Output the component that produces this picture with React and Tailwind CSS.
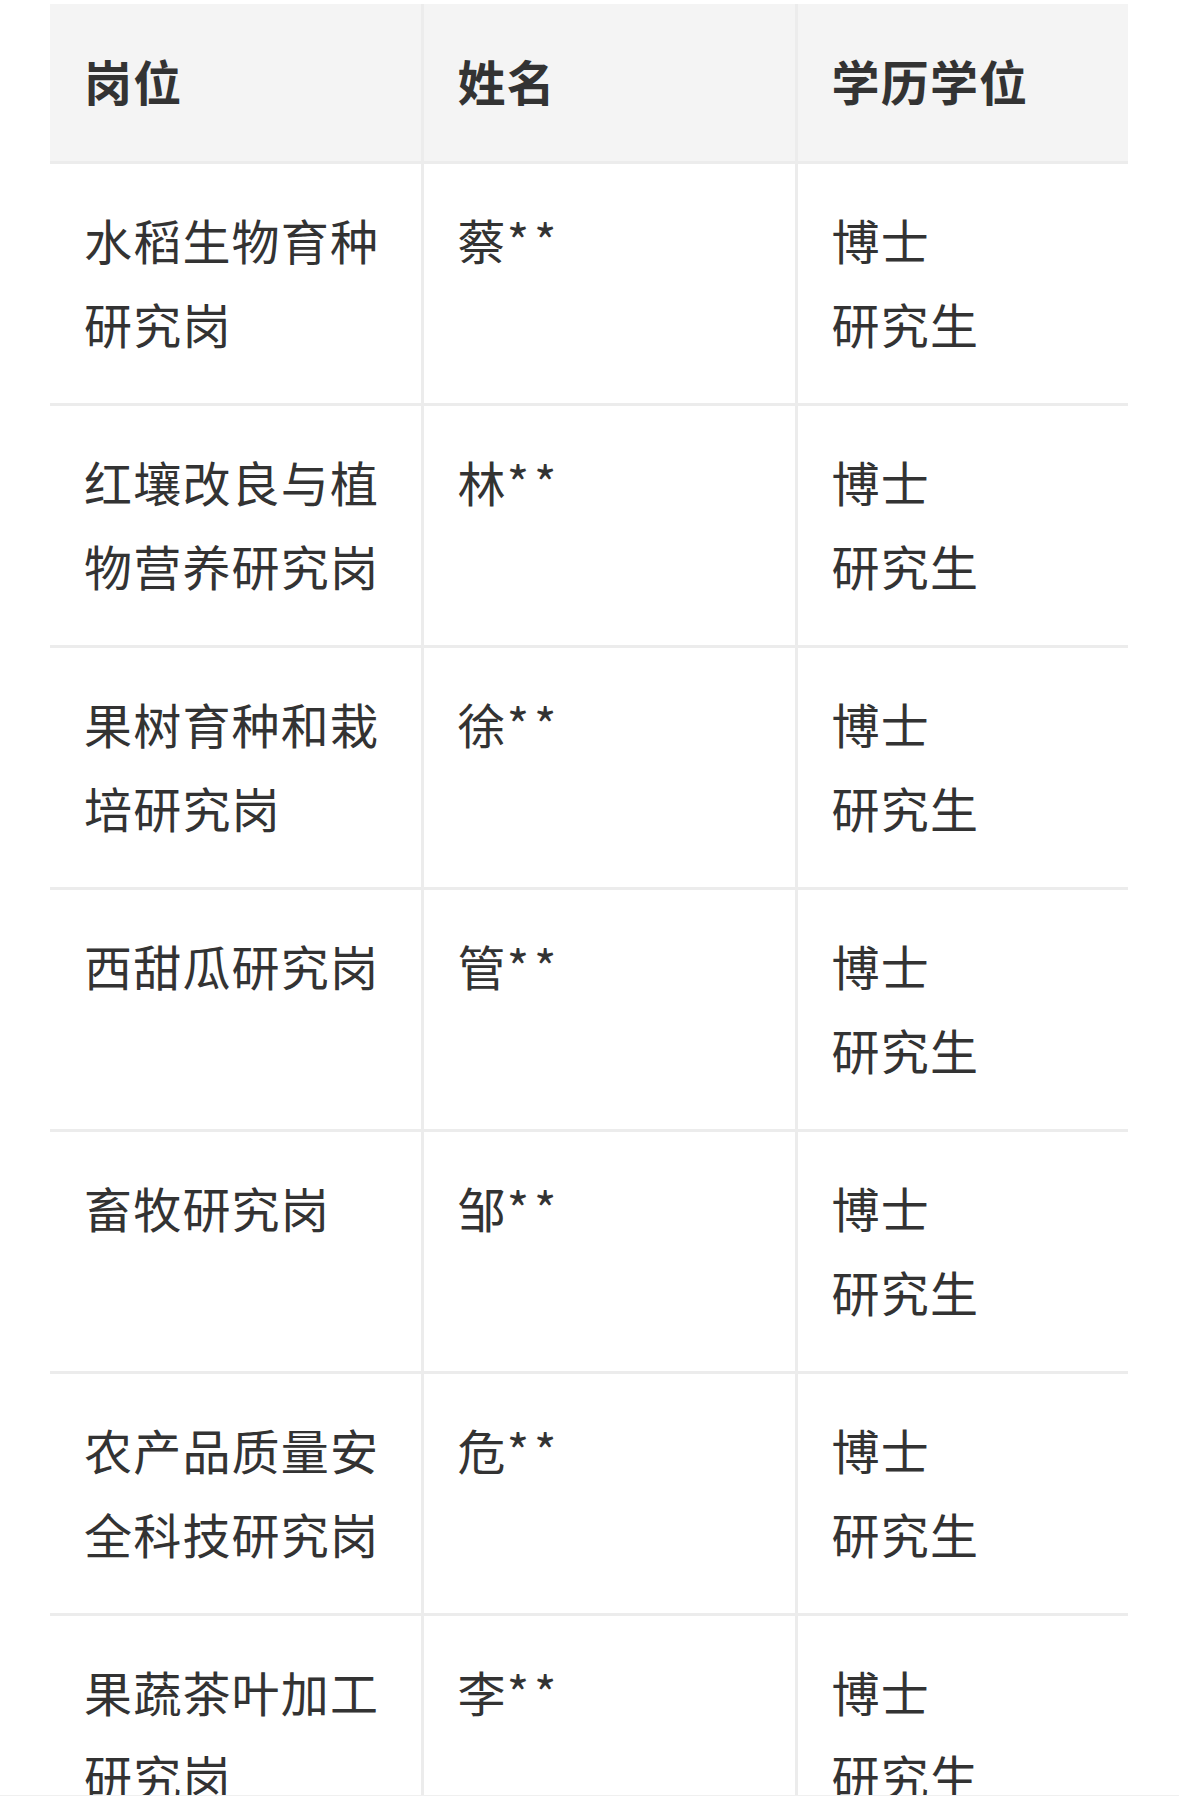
import React from 'react';

const rows = [
  { post: '水稻生物育种研究岗', name: '蔡**' },
  { post: '红壤改良与植物营养研究岗', name: '林**' },
  { post: '果树育种和栽培研究岗', name: '徐**' },
  { post: '西甜瓜研究岗', name: '管**' },
  { post: '畜牧研究岗', name: '邹**' },
  { post: '农产品质量安全科技研究岗', name: '危**' },
  { post: '果蔬茶叶加工研究岗', name: '李**' },
];

const App = () => {
  return (
    <div
      className="w-[1179px] h-[1805px] bg-white overflow-hidden text-[#333333]"
      style={{ fontFamily: '"Noto Sans CJK SC", "Noto Sans", sans-serif' }}
    >
      <div className="pl-[50px] pt-[4px] h-[1796px] overflow-hidden border-b border-[#f0f0f0]">
        <table className="w-[1078px] table-fixed border-collapse text-[48px] leading-[84px] tracking-[1.2px]">
          <colgroup>
            <col className="w-[372px]" />
            <col className="w-[374px]" />
            <col className="w-[332px]" />
          </colgroup>
          <thead>
            <tr className="bg-[#f4f4f4] border-b-[3px] border-[#ececec]">
              <th className="pl-[34px] pr-[24px] pt-[34px] pb-[39px] text-left font-semibold">岗位</th>
              <th className="pl-[34px] pr-[24px] pt-[34px] pb-[39px] text-left font-semibold border-l-[3px] border-[#ececec]">姓名</th>
              <th className="pl-[34px] pr-[24px] pt-[34px] pb-[39px] text-left font-semibold border-l-[3px] border-[#ececec]">学历学位</th>
            </tr>
          </thead>
          <tbody>
            {rows.map((r, i) => (
              <tr key={i} className="border-b-[3px] border-[#ececec] align-top">
                <td className="pl-[34px] pr-[24px] pt-[33px] pb-[38px] font-normal">{r.post}</td>
                <td className="pl-[34px] pr-[24px] pt-[33px] pb-[38px] border-l-[3px] border-[#ececec]">
                  {r.name.slice(0, 1)}
                  <span className="tracking-[5px]">{r.name.slice(1)}</span>
                </td>
                <td className="pl-[34px] pr-[24px] pt-[33px] pb-[38px] border-l-[3px] border-[#ececec]">
                  <div>博士</div>
                  <div>研究生</div>
                </td>
              </tr>
            ))}
          </tbody>
        </table>
      </div>
    </div>
  );
};

export default App;
